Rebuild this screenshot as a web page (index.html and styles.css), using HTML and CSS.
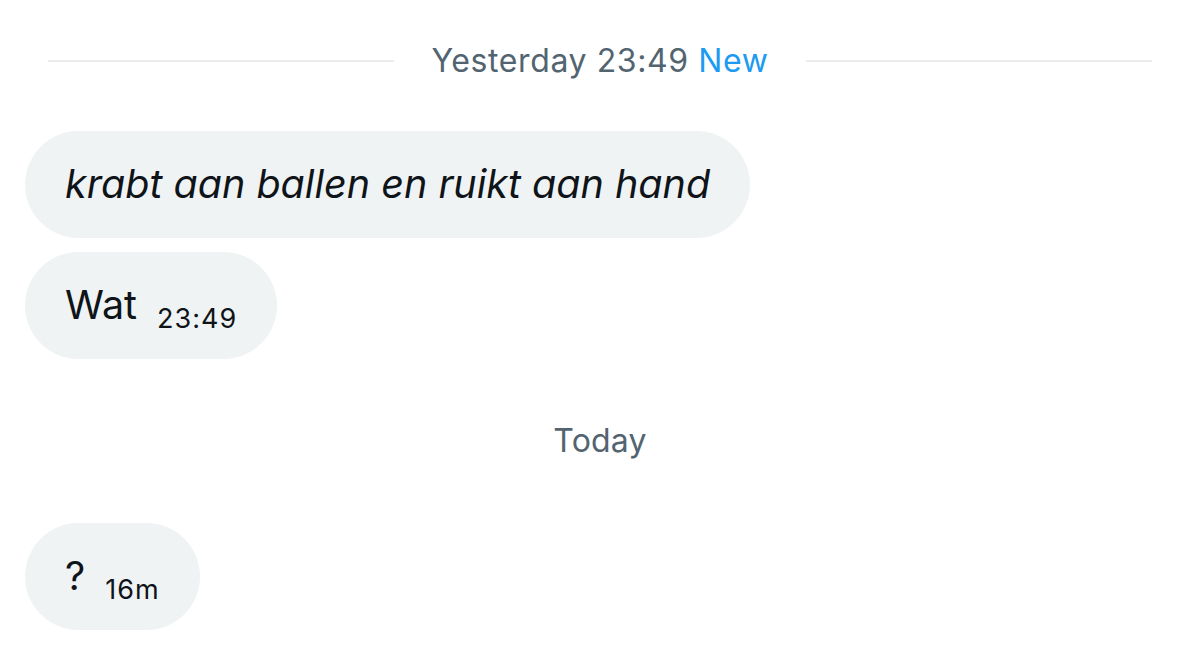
FILE: index.html
```html
<!DOCTYPE html>
<html lang="nl">
<head>
<meta charset="utf-8">
<title>Berichten</title>
<link rel="stylesheet" href="styles.css">
</head>
<body>
<main class="thread">
  <div class="divider">
    <span class="divider-line"></span>
    <span class="divider-label">Yesterday 23:49 <span class="divider-new">New</span></span>
    <span class="divider-line"></span>
  </div>

  <div class="messages">
    <div class="bubble bubble-first"><span class="msg-text msg-italic">krabt aan ballen en ruikt aan hand</span></div>
    <div class="bubble bubble-next"><span class="msg-text">Wat</span><span class="msg-time">23:49</span></div>
  </div>

  <div class="day-label">Today</div>

  <div class="messages">
    <div class="bubble bubble-first"><span class="msg-text">?</span><span class="msg-time">16m</span></div>
  </div>
</main>
</body>
</html>
```
FILE: styles.css
```css
html, body {
  margin: 0;
  padding: 0;
  background: #ffffff;
}

body {
  font-family: Inter, "Liberation Sans", sans-serif;
  color: #0f1419;
}

.thread {
  display: flex;
  flex-direction: column;
  padding-top: 41px;
}

/* "Yesterday … New" separator with rules on both sides */
.divider {
  display: flex;
  align-items: center;
  gap: 37px;
  height: 40px;
  padding: 0 48px;
}

.divider-line {
  flex: 1;
  height: 2px;
  background: #ebedef;
}

.divider-label {
  font-size: 32px;
  letter-spacing: 0.6px;
  line-height: 40px;
  color: #536471;
  white-space: nowrap;
}

.divider-new {
  color: #1d9bf0;
}

.messages {
  display: flex;
  flex-direction: column;
  align-items: flex-start;
  padding-left: 25px;
}

.bubble {
  display: flex;
  align-items: baseline;
  gap: 20px;
  height: 107px;
  padding: 0 40px;
  border-radius: 54px;
  background: #eff3f4;
  box-sizing: border-box;
}

.bubble-first {
  margin-top: 50px;
}

.bubble-next {
  margin-top: 14px;
}

.msg-text {
  font-size: 39.5px;
  line-height: 107px;
}

.msg-italic {
  font-style: italic;
}

.msg-time {
  font-size: 27px;
  letter-spacing: 1px;
  line-height: 107px;
  position: relative;
  top: 9px;
}

.day-label {
  margin-top: 62px;
  height: 40px;
  line-height: 40px;
  text-align: center;
  font-size: 32px;
  letter-spacing: 0.2px;
  color: #536471;
}

.day-label + .messages .bubble-first {
  margin-top: 62px;
}
```
